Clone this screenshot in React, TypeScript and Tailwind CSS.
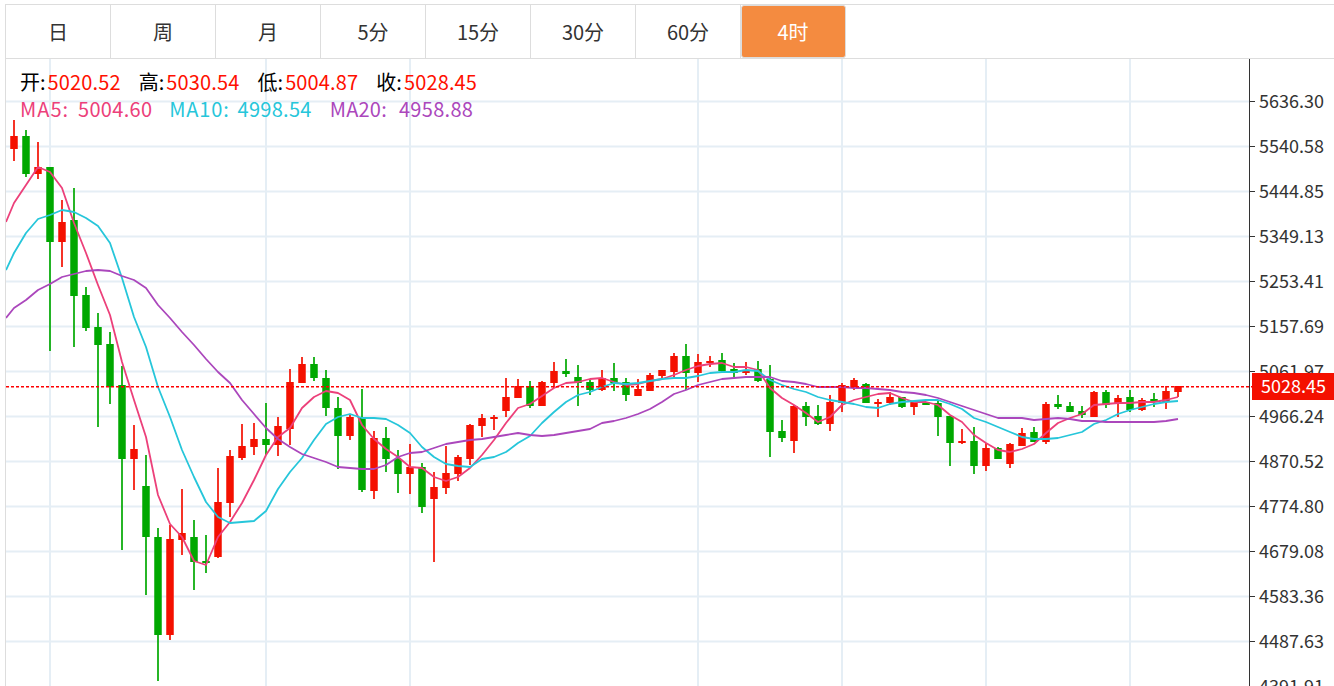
const tabs = ["日", "周", "月", "5分", "15分", "30分", "60分", "4时"];

const RED = "#f41000";
const GREEN = "#00a800";

// candle: body top, body bottom, wick top, wick bottom, colour
type Candle = [number, number, number, number, "r" | "g"];

const candles: Candle[] = [
  [136, 149, 120, 161, "r"], [136, 174, 130, 177, "g"], [167, 174, 142, 179, "r"], [167, 242, 167, 351, "g"],
  [222, 242, 200, 267, "r"], [220, 296, 188, 347, "g"], [295, 328, 287, 331, "g"], [327, 345, 313, 427, "g"],
  [344, 387, 332, 404, "g"], [385, 459, 366, 550, "g"], [449, 459, 425, 490, "r"], [486, 537, 455, 595, "g"],
  [537, 635, 528, 681, "g"], [539, 635, 525, 640, "r"], [533, 540, 489, 555, "r"], [537, 562, 520, 590, "g"],
  [561, 562, 535, 573, "g"], [502, 557, 468, 558, "r"], [456, 503, 450, 517, "r"], [446, 458, 424, 460, "r"],
  [439, 447, 423, 455, "r"], [439, 445, 403, 455, "g"], [426, 445, 417, 456, "r"], [382, 429, 369, 445, "r"],
  [364, 383, 357, 383, "r"], [364, 378, 357, 381, "g"], [378, 408, 370, 416, "g"], [408, 436, 397, 469, "g"],
  [417, 436, 415, 440, "r"], [418, 490, 389, 492, "g"], [438, 491, 431, 499, "r"], [438, 459, 427, 472, "g"],
  [459, 474, 450, 493, "g"], [467, 474, 444, 494, "r"], [467, 507, 463, 513, "g"], [487, 499, 472, 562, "r"],
  [473, 488, 446, 494, "r"], [457, 474, 455, 481, "r"], [425, 459, 424, 465, "r"], [418, 426, 414, 437, "r"],
  [417, 419, 415, 430, "r"], [397, 411, 378, 417, "r"], [386, 398, 379, 398, "r"], [386, 406, 381, 408, "g"],
  [382, 406, 381, 406, "r"], [371, 383, 362, 388, "r"], [371, 374, 359, 377, "g"], [377, 383, 365, 406, "g"],
  [382, 390, 380, 395, "g"], [378, 390, 370, 391, "r"], [378, 383, 363, 391, "g"], [382, 395, 378, 401, "g"],
  [389, 396, 379, 396, "r"], [375, 391, 373, 391, "r"], [370, 376, 370, 380, "r"], [356, 372, 353, 377, "r"],
  [356, 373, 344, 390, "g"], [362, 373, 354, 382, "r"], [361, 363, 356, 367, "r"], [360, 371, 353, 373, "g"],
  [369, 373, 363, 377, "g"], [371, 373, 362, 375, "r"], [369, 381, 361, 382, "g"], [379, 432, 365, 457, "g"],
  [431, 438, 420, 442, "g"], [406, 441, 405, 453, "r"], [406, 417, 402, 426, "g"], [416, 424, 405, 425, "g"],
  [402, 424, 395, 431, "r"], [385, 403, 383, 412, "r"], [380, 387, 378, 390, "r"], [384, 403, 383, 403, "g"],
  [402, 403, 399, 417, "r"], [397, 403, 392, 405, "r"], [397, 407, 397, 408, "g"], [402, 407, 402, 415, "r"],
  [402, 405, 402, 405, "g"], [403, 417, 400, 436, "g"], [416, 443, 416, 466, "g"], [441, 443, 429, 444, "r"],
  [441, 466, 427, 474, "g"], [448, 466, 443, 471, "r"], [448, 459, 447, 459, "g"], [444, 464, 443, 468, "r"],
  [433, 446, 428, 446, "r"], [432, 442, 427, 442, "g"], [404, 442, 402, 444, "r"], [404, 407, 395, 409, "g"],
  [406, 412, 402, 412, "g"], [411, 415, 406, 418, "g"], [392, 417, 391, 417, "r"], [392, 405, 390, 408, "g"],
  [398, 403, 395, 417, "r"], [397, 410, 390, 412, "g"], [400, 410, 398, 411, "r"], [399, 402, 393, 407, "g"],
  [391, 402, 386, 409, "r"], [386, 392, 386, 397, "r"],
];

const ma5 = [
  203, 185, 167, 172, 188, 223, 253, 285, 315, 362, 400, 437, 495, 524, 537, 561, 565, 537, 522, 503, 480, 455, 437, 428,
  408, 397, 391, 393, 400, 425, 439, 449, 457, 467, 468, 477, 481, 477, 468, 455, 440, 423, 408, 404, 396, 388, 383, 382,
  379, 378, 382, 385, 384, 381, 379, 375, 370, 366, 364, 363, 367, 367, 370, 388, 398, 405, 413, 422, 417, 405, 400, 397,
  394, 393, 398, 402, 402, 405, 415, 422, 435, 443, 450, 452, 449, 444, 433, 423, 418, 414, 405, 404, 403, 403, 402, 402,
  400, 397,
];
const ma10 = [
  253, 233, 219, 215, 210, 212, 218, 226, 243, 278, 317, 347, 387, 417, 450, 477, 502, 517, 523, 522, 521, 511, 489, 472,
  458, 440, 424, 417, 414, 418, 418, 419, 425, 433, 447, 457, 464, 466, 467, 459, 457, 452, 443, 436, 423, 412, 402, 395,
  392, 387, 383, 384, 383, 381, 379, 378, 378, 376, 373, 372, 372, 370, 371, 380, 385, 389, 392, 397, 400, 402, 404, 407,
  408, 404, 402, 401, 400, 400, 404, 409, 418, 422, 427, 432, 437, 439, 439, 438, 435, 432, 424, 420, 414, 410, 407, 404,
  402, 401,
];
const ma20 = [
  308, 300, 290, 284, 277, 274, 271, 270, 271, 276, 280, 288, 305, 318, 332, 345, 359, 372, 383, 400, 414, 428, 439, 447,
  454, 458, 462, 467, 468, 469, 469, 465, 457, 453, 452, 448, 444, 442, 440, 439, 437, 435, 433, 435, 436, 435, 433, 431,
  429, 423, 421, 418, 414, 409, 402, 394, 390, 385, 382, 379, 378, 377, 377, 377, 381, 382, 384, 387, 387, 387, 388, 388,
  389, 390, 392, 393, 395, 398, 402, 406, 410, 414, 418, 418, 418, 420, 419, 418, 419, 421, 421, 422, 422, 422, 422, 422,
  421, 419,
];

const axis = [
  "5636.30", "5540.58", "5444.85", "5349.13", "5253.41", "5157.69", "5061.97",
  "4966.24", "4870.52", "4774.80", "4679.08", "4583.36", "4487.63", "4391.91",
];
const vLines = [50, 266, 410, 698, 842, 986, 1130];

const linePoints = (ys: number[], startY: number) =>
  `6,${startY} ` + ys.map((y, i) => `${14 + i * 12},${y}`).join(" ");

function KChart() {
  return (
    <svg viewBox="6 59 1328 627" className="block w-[1328px] h-[627px]">
      {vLines.map((x) => (
        <line key={x} x1={x} x2={x} y1={59} y2={686} stroke="#e5eef5" strokeWidth={2} />
      ))}
      {axis.slice(0, 13).map((_, i) => (
        <line key={i} x1={6} x2={1249} y1={101.5 + i * 45} y2={101.5 + i * 45} stroke="#e5eef5" strokeWidth={2} />
      ))}

      {candles.map(([top, bottom, wickTop, wickBottom, c], i) => {
        const x = 14 + i * 12;
        const color = c === "r" ? RED : GREEN;
        return (
          <g key={i}>
            <line x1={x} x2={x} y1={wickTop} y2={wickBottom} stroke={color} strokeWidth={1.7} />
            <rect x={x - 3.75} y={top} width={7.5} height={Math.max(bottom - top, 2)} fill={color} />
          </g>
        );
      })}

      <polyline points={linePoints(ma5, 222)} fill="none" stroke="#ec407a" strokeWidth={1.8} strokeLinejoin="round" />
      <polyline points={linePoints(ma10, 270)} fill="none" stroke="#26c6da" strokeWidth={1.8} strokeLinejoin="round" />
      <polyline points={linePoints(ma20, 318)} fill="none" stroke="#ab47bc" strokeWidth={1.8} strokeLinejoin="round" />

      <line x1={6} x2={1252} y1={386.7} y2={386.7} stroke="#ff0000" strokeWidth={1.5} strokeDasharray="3 2" />

      {/* price axis */}
      <line x1={1249.5} x2={1249.5} y1={59} y2={686} stroke="#333333" strokeWidth={1} />
      {axis.map((label, i) => (
        <g key={label}>
          <line x1={1250} x2={1255} y1={101.5 + i * 45} y2={101.5 + i * 45} stroke="#333333" strokeWidth={1} />
          <text x={1259} y={108 + i * 45} fontSize={18} fill="#333333">
            {label}
          </text>
        </g>
      ))}

      <rect x={1252} y={373} width={82} height={27} fill={RED} />
      <text x={1261} y={393} fontSize={18} fill="#ffffff">
        5028.45
      </text>
    </svg>
  );
}

function Legend() {
  return (
    <div className="absolute left-[14px] top-[9px] text-[20px] leading-[27px]">
      <div className="flex gap-[18px] text-black">
        <span className="flex gap-[2px]">开:<span className="tracking-[0.15px] text-[#ff1000]">5020.52</span></span>
        <span className="flex gap-[2px]">高:<span className="tracking-[0.15px] text-[#ff1000]">5030.54</span></span>
        <span className="flex gap-[2px]">低:<span className="tracking-[0.15px] text-[#ff1000]">5004.87</span></span>
        <span className="flex gap-[2px]">收:<span className="tracking-[0.15px] text-[#ff1000]">5028.45</span></span>
      </div>
      <div className="flex gap-[18px]">
        <span className="flex gap-[9px] text-[#ec407a]">
          <span className="tracking-[1px]">MA5:</span>
          <span className="tracking-[0.3px]">5004.60</span>
        </span>
        <span className="ml-[-1px] flex gap-[8px] text-[#26c6da]">
          <span className="tracking-[0.8px]">MA10:</span>
          <span className="tracking-[0.3px]">4998.54</span>
        </span>
        <span className="flex gap-[12px] text-[#ab47bc]">
          <span className="tracking-[0.2px]">MA20:</span>
          <span className="tracking-[0.3px]">4958.88</span>
        </span>
      </div>
    </div>
  );
}

export default function App() {
  return (
    <div className="h-[686px] w-[1334px] overflow-hidden bg-white pl-[5px] pt-[4px] font-['Noto_Sans_CJK_SC','Noto_Sans',sans-serif]">
      <div className="flex h-[55px] border-y border-l border-[#dddddd]">
        {tabs.map((t) => (
          <div
            key={t}
            className={
              t === "4时"
                ? "flex w-[105px] items-center justify-center rounded-[3px] border border-[#dddddd] bg-[#f48b40] pr-[1px] text-[20px] text-white"
                : "flex w-[105px] items-center justify-center border-r border-[#dddddd] text-[20px] text-[#333333]"
            }
          >
            {t}
          </div>
        ))}
      </div>
      <div className="relative border-l border-[#dddddd]">
        <KChart />
        <Legend />
      </div>
    </div>
  );
}
